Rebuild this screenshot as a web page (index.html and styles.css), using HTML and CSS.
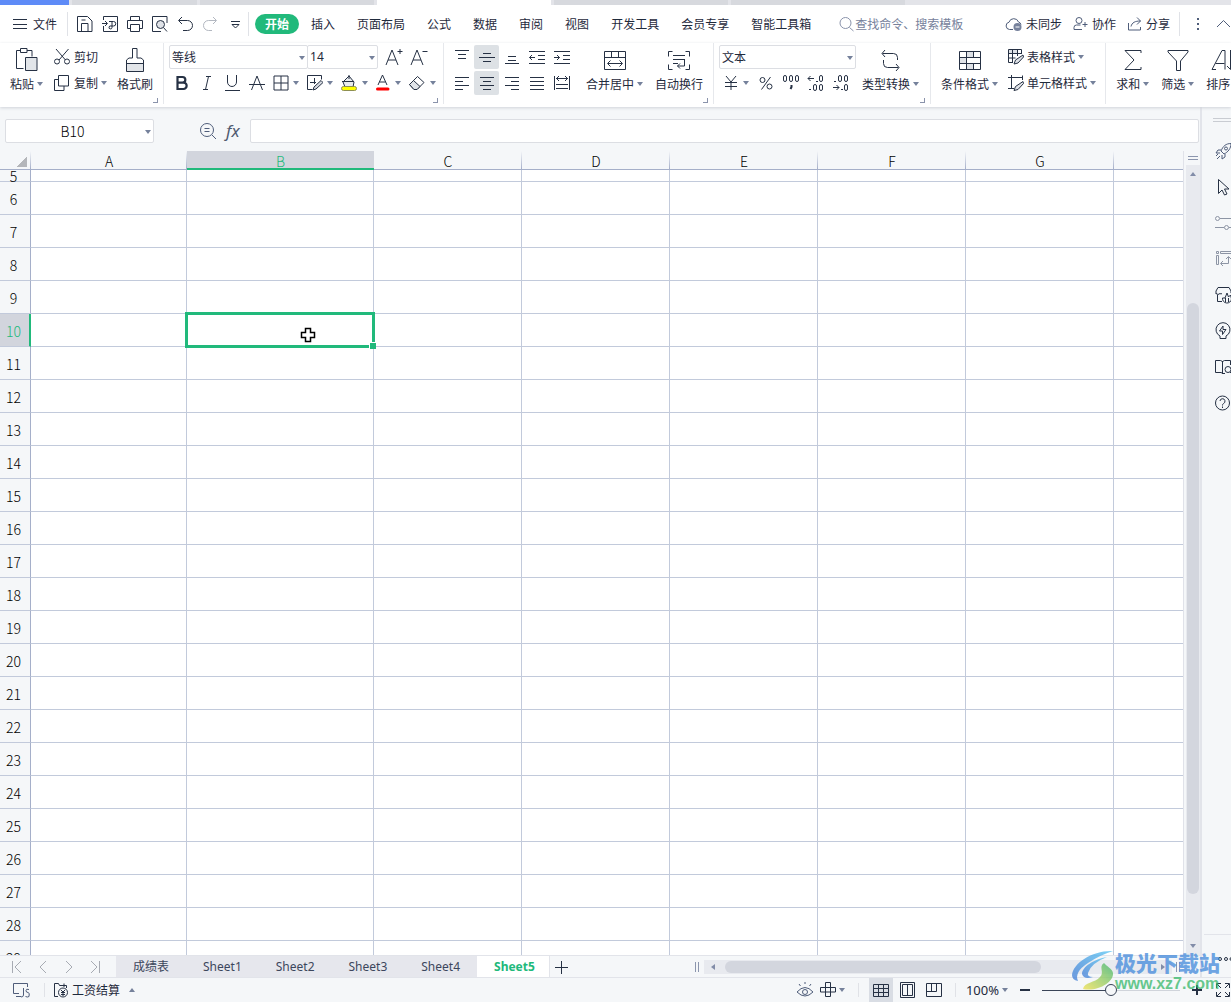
FILE: index.html
```html
<!DOCTYPE html>
<html lang="zh-CN">
<head>
<meta charset="utf-8">
<title>工资结算</title>
<link rel="stylesheet" href="styles.css">
</head>
<body>
<div class="doc-tabs"><span class="doc home"></span><span class="doc narrow"></span><span class="doc"></span><span class="doc current"></span><span class="doc"></span><span class="doc"></span></div>

<header class="menu">
  <button class="file"><svg width="15" height="16"><path d="M0 3.500h14M0 8.500h14M0 12.500h14"/></svg>文件</button>
  <span class="rule"></span>
  <div class="quick">
    <button aria-label="保存"><svg width="16" height="16"><path d="M.5 15.500V.5h10l4.500 4.500v10.500zM4.500 15V7.500h6.500V15M4.500 4h4"/></svg></button>
    <button aria-label="输出"><svg width="16" height="16"><path d="M1.500 4V.5h14v15h-14V10M0 7.500h5M3 5l2.500 2.500L3 10M7 5.500h4.500a1.500 1.500 0 0 1 0 4.500H9a1.500 1.500 0 1 0 1 1.500V5.500"/></svg></button>
    <button aria-label="打印"><svg width="16" height="16"><path d="M3.500 4.500V.5h9v4M3.500 12.500h-3v-8h15v8h-3M3.500 8.500h9v7h-9z"/></svg></button>
    <button aria-label="打印预览"><svg width="16" height="16"><path d="M15 7V.5H.5v15H9M11.500 11.500l3.500 4"/><circle cx="8.500" cy="8.500" r="4" fill="#dfe2e7"/></svg></button>
    <button aria-label="撤销"><svg width="16" height="16"><path d="M5 1L1.500 4.500 5 8M2 4.500h8.500a5 5 0 0 1 0 10H6"/></svg></button>
    <button aria-label="恢复" class="off"><svg width="16" height="16"><path d="M11 1l3.500 3.500L11 8M14 4.500H6.500a5 5 0 0 0 0 10H10"/></svg></button>
    <button aria-label="更多"><svg width="16" height="16"><path d="M4 5.500h9M5 8.500l3.500 3.500L12 8.500z"/></svg></button>
  </div>
  <span class="rule"></span>
  <nav class="tabs">
    <a href="#" class="on">开始</a><a href="#">插入</a><a href="#">页面布局</a><a href="#">公式</a><a href="#">数据</a><a href="#">审阅</a><a href="#">视图</a><a href="#">开发工具</a><a href="#">会员专享</a><a href="#">智能工具箱</a>
  </nav>
  <label class="search"><svg width="16" height="16"><circle cx="6.500" cy="7" r="5.500"/><path d="M10.500 11.500L14.500 15"/></svg><input type="text" placeholder="查找命令、搜索模板" aria-label="查找命令"></label>
  <div class="account">
    <button><svg width="18" height="16" class="mute"><path d="M8 13.500H4.500a3.700 3.700 0 0 1-.500-7.300A5 5 0 0 1 13.500 6M13.500 6a3.500 3.500 0 0 1 2.500 2.500"/><circle cx="12.500" cy="11" r="4" fill="#77829c" stroke="none"/><path d="M10.500 11h4" stroke="#fff"/></svg>未同步</button>
    <button><svg width="16" height="16" class="mute"><circle cx="6" cy="4.500" r="3"/><path d="M1 13.500v-2a2.500 2.500 0 0 1 2.500-2.500h4M1 13.500h8M9.500 8.500h5M12 6v5"/></svg>协作</button>
    <button><svg width="16" height="16" class="mute"><path d="M1.500 7v7h12v-3M4 10.500c1-4 4-5.500 9.500-5.500M10 1.500L13.500 5 10 8.500"/></svg>分享</button>
  </div>
  <span class="rule"></span>
  <button class="dots" aria-label="菜单"><svg width="4" height="16" class="mute"><path d="M1 3h2M1 8h2M1 13h2" stroke-width="2"/></svg></button>
  <button class="fold" aria-label="折叠"><svg width="15" height="16" class="mute"><path d="M1 11l6.500-6.500L14 11"/></svg></button>
</header>

<section class="ribbon">
  <div class="group clip">
    <button class="big"><svg width="24" height="24"><path d="M8.500 20.500h-7v-18h4M12 2.500h5v6M5.500.5h6.500v4h-6.500z"/><path d="M10.500 9.500h11.500v13h-11.500z" fill="#e2e5e9"/></svg><span class="drop">粘贴</span></button>
    <div class="stack">
      <button class="line"><svg width="17" height="16"><path d="M2 0l9.500 11M14.500 0L5 11"/><circle cx="3" cy="12.500" r="2.500"/><circle cx="13" cy="12.500" r="2.500"/></svg>剪切</button>
      <button class="line"><svg width="17" height="16"><path d="M4.500.5h10v10.500h-10zM4.500 4.500h-4v11h9.500V11"/></svg><span class="drop">复制</span></button>
    </div>
    <button class="big brush"><svg width="24" height="24"><path d="M3 15h17v8H3z" fill="#e2e5e9" stroke="none"/><path d="M9.500.5h4.500v9.500h4l2.500 2v11.500h-17V12l2.500-2h3.500zM3.500 15.500h17"/></svg><span>格式刷</span></button>
    <button class="more" aria-label="剪贴板设置"></button>
  </div>

  <div class="group font">
    <div class="stack">
      <div class="row">
        <label class="pick face"><select aria-label="字体"><option>等线</option></select></label><label class="pick size"><select aria-label="字号"><option>14</option></select></label>
        <button class="ib first" aria-label="增大字号"><svg width="18" height="18"><path d="M1 17L7 2l6 15M3 12h8M12.500 3.500h5M15 1v5"/></svg></button>
        <button class="ib" aria-label="减小字号"><svg width="18" height="18"><path d="M1 17L7 2l6 15M3 12h8M12.500 3.500h5"/></svg></button>
      </div>
      <div class="row">
        <button class="ib" aria-label="加粗"><svg width="16" height="16"><path d="M3.500 2h5a2.800 2.800 0 0 1 0 5.700h-5zM3.500 7.700h6a3.100 3.100 0 0 1 0 6.300h-6z" stroke-width="2.200"/></svg></button>
        <button class="ib" aria-label="倾斜"><svg width="16" height="16"><path d="M7 1.500h5M9.500 1.500l-3 13M4 14.500h5"/></svg></button>
        <button class="ib" aria-label="下划线"><svg width="16" height="16"><path d="M3.500 0v7a4.500 4.500 0 0 0 9 0V0M1 15.500h15"/></svg></button>
        <button class="ib" aria-label="删除线"><svg width="16" height="16"><path d="M2.500 15L8 1l5.500 14M0 9.500h16"/></svg></button>
        <button class="ib wide" aria-label="边框"><svg width="16" height="16"><path d="M1 1h14v14H1zM8 1v14M1 8h14"/></svg></button>
        <button class="ib wide" aria-label="绘图边框"><svg width="16" height="16"><path d="M5.500 14.500h-5V.5h14v4M3 7.500h6M7.500 3v6"/><path d="M6 15l1-3 7-6.500 2 2L9 14z" fill="#d5d9e0"/></svg></button>
        <button class="ib wide" aria-label="填充颜色"><svg width="18" height="18"><path d="M3 8l6-6 5 6-1 5H5z" fill="#e8ebef"/><path d="M2 7.500h12M9 1v4"/><rect x="1.500" y="12.500" width="15" height="4" rx="2" fill="#ff0" stroke="#8e8f52"/></svg></button>
        <button class="ib wide" aria-label="字体颜色"><svg width="16" height="18"><path d="M3 11L7.500 1 12 11M4.500 8h6"/><path d="M2.500 15h10.500" stroke="#f00" stroke-width="3" stroke-linecap="round"/></svg></button>
        <button class="ib wide" aria-label="清除"><svg width="18" height="18"><path d="M1.500 10.500l8-8 6.500 6-7 7H6z"/><path d="M1.500 10.500l4-4 6.500 6-3 3H6z" fill="#dfe3e8"/></svg></button>
      </div>
    </div>
    <button class="more" aria-label="字体设置"></button>
  </div>

  <div class="group align">
    <div class="stack">
      <div class="row">
        <button class="ib" aria-label="顶端对齐"><svg width="16" height="16"><path d="M1 1.500h14M4 5.500h8M4 9.500h8"/></svg></button>
        <button class="ib on" aria-label="垂直居中"><svg width="16" height="16"><path d="M4 4.500h8M0 8.500h16M4 12.500h8"/></svg></button>
        <button class="ib" aria-label="底端对齐"><svg width="16" height="16"><path d="M4 7.500h8M4 11.500h8M1 14.500h14"/></svg></button>
        <button class="ib" aria-label="减少缩进"><svg width="18" height="16"><path d="M1 2.500h16M10 6.500h7M10 10.500h7M1 14.500h16M1.500 8.500H7M4 6L1.500 8.500 4 11"/></svg></button>
        <button class="ib" aria-label="增加缩进"><svg width="18" height="16"><path d="M1 2.500h16M10 6.500h7M10 10.500h7M1 14.500h16M1 8.500h5.500M4 6l2.500 2.500L4 11"/></svg></button>
      </div>
      <div class="row">
        <button class="ib" aria-label="左对齐"><svg width="16" height="16"><path d="M1 2.500h14M1 6.500h8M1 10.500h14M1 14.500h8"/></svg></button>
        <button class="ib on" aria-label="水平居中"><svg width="16" height="16"><path d="M1 2.500h14M4 6.500h8M1 10.500h14M4 14.500h8"/></svg></button>
        <button class="ib" aria-label="右对齐"><svg width="16" height="16"><path d="M1 2.500h14M7 6.500h8M1 10.500h14M7 14.500h8"/></svg></button>
        <button class="ib" aria-label="两端对齐"><svg width="16" height="16"><path d="M1 2.500h14M1 6.500h14M1 10.500h14M1 14.500h14"/></svg></button>
        <button class="ib" aria-label="分散对齐"><svg width="18" height="16"><path d="M1.500 1v14M16.500 1v14M3 3.500h12M6 1L3.500 3.500 6 6M12 1l2.500 2.500L12 6M3 9.500h12M3 13.500h12"/></svg></button>
      </div>
    </div>
    <button class="big"><svg width="24" height="24"><path d="M1.500 3.500h21v18h-21zM1.500 9.500h21M8.500 3.500v6M15.500 3.500v6M5 15.500h14M7.500 12.500l-3 3 3 3M16.500 12.500l3 3-3 3"/></svg><span class="drop">合并居中</span></button>
    <button class="big"><svg width="24" height="24"><path d="M5.500 3.500h-4v5M18.500 3.500h4v5M5.500 21.500h-4v-5M18.500 21.500h4v-5M6 7.500h12M6 11.500h12M6 15.500h5M17.500 11.500v6.500h-7M13 15.500L10.500 18l2.500 2.500"/></svg><span>自动换行</span></button>
    <button class="more" aria-label="对齐设置"></button>
  </div>

  <div class="group num">
    <div class="stack">
      <div class="row"><label class="pick kind"><select aria-label="数字格式"><option>文本</option></select></label></div>
      <div class="row">
        <button class="ib wide" aria-label="货币"><svg width="16" height="16"><path d="M3 1l5 6 5-6M8 7v8M2 7.500h12M2 11.500h12"/></svg></button>
        <button class="ib" aria-label="百分比"><svg width="16" height="16"><circle cx="4.500" cy="5" r="2.500"/><circle cx="11.500" cy="11.500" r="2.500"/><path d="M12.500 2l-9 12.500"/></svg></button>
        <button class="ib" aria-label="千位分隔"><svg width="18" height="18"><rect x="1.500" y="1.500" width="3" height="6" rx="1.500"/><rect x="7.500" y="1.500" width="3" height="6" rx="1.500"/><rect x="13.500" y="1.500" width="3" height="6" rx="1.500"/><path d="M9.500 11v2l-1 2" stroke-width="2"/></svg></button>
        <button class="ib" aria-label="增加小数位"><svg width="18" height="18"><path d="M1 4.500h6M3.500 2L1 4.500 3.500 7M9 7.500h2M2 15.500h2"/><rect x="12.500" y="1.500" width="3" height="6" rx="1.500"/><rect x="6.500" y="10.500" width="3" height="6" rx="1.500"/><rect x="12.500" y="10.500" width="3" height="6" rx="1.500"/></svg></button>
        <button class="ib" aria-label="减少小数位"><svg width="18" height="18"><path d="M1 13.500h6M4.500 11L7 13.500 4.500 16M2 7.500h2M9 15.500h2"/><rect x="6.500" y="1.500" width="3" height="6" rx="1.500"/><rect x="12.500" y="1.500" width="3" height="6" rx="1.500"/><rect x="12.500" y="10.500" width="3" height="6" rx="1.500"/></svg></button>
      </div>
    </div>
    <button class="big"><svg width="24" height="24"><path d="M6 2L3 5.500 6 9M3.500 5.500h11a4 4 0 0 1 4 4V12M17 23l3-3.500-3-3.500M19.500 19.500H8.500a4 4 0 0 1-4-4V12"/></svg><span class="drop">类型转换</span></button>
    <button class="more" aria-label="数字设置"></button>
  </div>

  <div class="group style">
    <button class="big"><svg width="24" height="24"><path d="M8 4h7v5H8zM1 10h7v6H1zM8 16h7v5H8z" fill="#dfe2e7" stroke="none"/><path d="M1.500 3.500h21v18h-21zM1.500 9.500h21M1.500 15.500h21M8.500 3.500v18M15.500 3.500v6M15.500 15.500v6"/></svg><span class="drop">条件格式</span></button>
    <div class="stack">
      <button class="line"><svg width="16" height="16"><path d="M1 1h8v4H1z" fill="#dfe2e7" stroke="none"/><path d="M5 13.500H.5V.5h13V5M.5 4.500h13M.5 9h7M4.500.5v13M9.500.5V7"/><path d="M6 15l1.500-4 7.500-5 .5 2-5.500 6z" fill="#dfe2e7"/></svg><span class="drop">表格样式</span></button>
      <button class="line"><svg width="16" height="16"><path d="M6 13.500H3.500V0M0 2.500h15M14.500.5V5M0 13.500h6"/><path d="M6 15.500l1.500-4 7.500-5 .5 2-5.500 6z" fill="#dfe2e7"/></svg><span class="drop">单元格样式</span></button>
    </div>
  </div>

  <div class="group last">
    <button class="big"><svg width="24" height="24"><path d="M20 5V2.500H4l9 9.500-9 9.500h16V19"/></svg><span class="drop">求和</span></button>
    <button class="big"><svg width="24" height="24"><path d="M2 2.500h20v1.500l-7.500 9v9.500h-4V13L2 4z"/></svg><span class="drop">筛选</span></button>
    <button class="big"><svg width="24" height="24"><path d="M1 21.500L11 2.500h3v19M4.500 15.500h9M1 21.500h4M19.500 2v19M16 18l3.500 3.500L23 18"/></svg><span class="drop">排序</span></button>
  </div>
</section>

<main class="work">
  <div class="book">
    <div class="formula">
      <label class="pick name"><input type="text" value="B10" aria-label="名称框"></label>
      <div class="fx">
        <button aria-label="浏览公式"><svg width="18" height="18" class="mute"><circle cx="8" cy="8" r="6.500"/><path d="M13 13l4 4M5.500 6.500h5M5.500 9.500h5"/></svg></button>
        <button class="fn" aria-label="插入函数">fx</button>
      </div>
      <input class="bar" type="text" aria-label="编辑栏">
    </div>
    <div class="sheet">
      <div class="view">
        <table>
          <colgroup><col class="c-head"><col class="c-a"><col class="c-b"><col class="c"><col class="c"><col class="c"><col class="c"><col class="c"><col></colgroup>
          <thead><tr><th class="corner"></th><th>A</th><th class="sel">B</th><th>C</th><th>D</th><th>E</th><th>F</th><th>G</th><th></th></tr></thead>
          <tbody id="rows"></tbody>
        </table>
      </div>
      <div class="vscroll">
        <span class="split"></span>
        <div class="track"><span class="arrow up"></span><span class="thumb"></span><span class="arrow down"></span></div>
      </div>
    </div>
    <div class="sheetbar">
      <div class="step">
        <button aria-label="第一张"><svg width="12" height="14"><path d="M1.500 1v12M10 1L4 7l6 6"/></svg></button>
        <button aria-label="上一张"><svg width="12" height="14"><path d="M9 1L3 7l6 6"/></svg></button>
        <button aria-label="下一张"><svg width="12" height="14"><path d="M3 1l6 6-6 6"/></svg></button>
        <button aria-label="最后一张"><svg width="12" height="14"><path d="M10.500 1v12M2 1l6 6-6 6"/></svg></button>
      </div>
      <nav class="sheets"><a href="#">成绩表</a><a href="#">Sheet1</a><a href="#">Sheet2</a><a href="#">Sheet3</a><a href="#">Sheet4</a><a href="#" class="on">Sheet5</a></nav>
      <button class="add" aria-label="新建工作表"><svg width="14" height="14"><path d="M0 7.500h13M6.500 1v13"/></svg></button>
      <span class="grip"></span>
      <div class="hscroll"><span class="arrow left"></span><span class="thumb"></span><span class="arrow right"></span></div>
      <span class="grip end"></span>
    </div>
  </div>
  <aside class="side">
    <span class="handle"></span>
    <button aria-label="推荐"><svg width="18" height="18" class="mute"><path d="M6 9c2-5 5-7.500 10-7.500C16 6.500 13 10 9 12zM6 8H3l-2 3h4M10 12v3l-3 2v-4M1 14l2-2M2 17l3-3"/><circle cx="11" cy="6.500" r="1.500"/></svg></button>
    <button aria-label="选择"><svg width="18" height="18"><path d="M3.500 1.500v14l3.500-3.500 2.500 5 2.500-1-2.500-5h4.500z"/></svg></button>
    <button aria-label="属性"><svg width="18" height="18" class="pale"><circle cx="2.500" cy="4.500" r="2"/><circle cx="11.500" cy="13.500" r="2"/><path d="M5 4.500h13M0 13.500h9M14 13.500h4"/></svg></button>
    <button aria-label="分析"><svg width="18" height="18" class="pale"><path d="M1.500 1.500h2v2h-2zM5.500 1.500h12v2h-12zM1.500 5.500h2v9h-2zM13.500 7v6.500H6M11 9l2.500-2.500L16 9M8 11l-2.500 2.500L8 16"/></svg></button>
    <button aria-label="备份"><svg width="18" height="18"><path d="M7 15.500H2.500V9M1 8V5l2-3.500h11L16 5v2M1 7.500q2 2 4 0 1 1 2 0"/><path d="M7.500 12a4.500 4.500 0 0 0 9 1l-1-4-2 2-1.500-4-2 5zM10.500 12v4M13.500 12v4"/></svg></button>
    <button aria-label="灵感"><svg width="18" height="18"><path d="M5 14A7 7 0 1 1 11 14v2.500H5zM8 4L4.500 9h3v3.500L11 7.500H8z"/></svg></button>
    <button aria-label="手册"><svg width="18" height="18"><path d="M7.500 3v13M8 15.500L6 14.500H.5v-12h5l2 1 2-1h6V7M8 15.500h2"/><circle cx="13" cy="11.500" r="3"/><path d="M15 14l3 3"/></svg></button>
    <button aria-label="帮助"><svg width="18" height="18"><circle cx="7.500" cy="9" r="7"/><path d="M5 7a2.500 2.500 0 1 1 3.500 2.500Q7.500 10 7.500 11.500M7.500 12.500v1.500"/></svg></button>
    <button class="ooo" aria-label="更多工具"><svg width="18" height="10"><circle cx="5" cy="5" r="1.500"/><circle cx="11" cy="5" r="1.500"/><circle cx="16.500" cy="5" r="1.500"/></svg></button>
  </aside>
</main>

<footer class="status">
  <button aria-label="脚本"><svg width="18" height="16" class="mute"><path d="M6 11.500H.5v-10h14V5M3 14.500h5M10.500 6v7q0 2-2.500 2M16 7.500q-3-1-3 1t2 2 1 4q-1.500 1-3.500 0"/></svg></button>
  <span class="rule"></span>
  <button class="plan"><svg width="16" height="16"><path d="M5 14.500H1.500V1.500h4l1 2h3M11 1.500V5M8.500 3.500h5V6"/><circle cx="10" cy="10.500" r="4.500"/><path d="M8 8l2 2 2-2M8 10.500h4M8 12.500h4M10 10v4"/></svg>工资结算<i class="tri up"></i></button>
  <div class="tools">
    <button aria-label="护眼模式"><svg width="18" height="18" class="mute"><path d="M1 11q8-9 16 0-8 8-16 0zM9 1v2M3 3l1.500 2M15 3l-1.500 2"/><circle cx="9" cy="11" r="2.500"/></svg></button>
    <button aria-label="阅读模式"><svg width="16" height="16"><path d="M5.500.5h5v14h-5zM.5 5.500h15v4.500H.5z"/></svg><i class="tri"></i></button>
    <span class="rule"></span>
    <button class="on" aria-label="普通视图"><svg width="16" height="16"><path d="M.5 2.500h15v12H.5zM.5 6.500h15M.5 10.500h15M5.500 2.500v12M10.500 2.500v12"/></svg></button>
    <button class="page" aria-label="页面布局"><svg width="16" height="16"><path d="M.5.5h14v15H.5zM2.500 2.500h10v11h-10zM7.500 2.500v11"/></svg></button>
    <button class="page" aria-label="分页预览"><svg width="16" height="16"><path d="M.5 1.500h15v13H.5zM5.500 1.500v8M10.500 1.500v8M.5 9.500h10"/></svg></button>
    <span class="rule"></span>
    <button class="pct">100%<i class="tri"></i></button>
    <button class="minus" aria-label="缩小"><svg width="10" height="10"><path d="M0 5h10" stroke-width="2"/></svg></button>
    <input type="range" min="0" max="200" value="100" aria-label="缩放">
    <button class="plus" aria-label="放大"><svg width="10" height="10"><path d="M0 5h10M5 0v10" stroke-width="2"/></svg></button>
    <button class="full" aria-label="全屏"><svg width="16" height="16"><path d="M10 1.500h4.500V6M14 2l-4 4M6 1.500H1.500V6M2 2l4 4M1.500 10v4.500H6M2 14l4-4M14.500 10v4.500H10M14 14l-4-4"/></svg></button>
  </div>
</footer>

<div class="brand">
  <svg width="44" height="42" viewBox="0 0 44 42">
    <defs>
      <linearGradient id="blue" x1="0" y1="1" x2="1" y2="0"><stop offset="0" stop-color="#3f7ad6"/><stop offset="1" stop-color="#53c3f2"/></linearGradient>
      <linearGradient id="green" x1="0" y1="1" x2="1" y2="0"><stop offset="0" stop-color="#f0e04a"/><stop offset="1" stop-color="#38b56b"/></linearGradient>
    </defs>
    <g stroke="none">
      <path d="M42 1C22 0 2 13 1 25q0 5 6 6Q3 22 17 13 29 5 42 1z" fill="url(#blue)"/>
      <path d="M36 7C23 9 11 17 11 24q2 6 11 3-6 0-5-4Q20 13 36 7z" fill="url(#blue)"/>
      <path d="M33 13c-6 4 1 9-4 14-5 6-16 5-17 12 15 3 31-7 30-16-1-5-6-6-9-10z" fill="url(#green)"/>
    </g>
  </svg>
  <div><b class="cn">极光下载站</b><b class="url">www.xz7.com</b></div>
</div>
<script src="app.js"></script>
</body>
</html>
```
FILE: styles.css
```css
* { box-sizing: border-box; }
body {
  margin: 0; height: 100vh; display: flex; flex-direction: column; overflow: hidden;
  position: relative; background: #f5f7f9; color: #1f2a3c;
  font: 12px/16px "Noto Sans CJK SC", sans-serif;
}
button, input, select { font: inherit; color: inherit; border: 0; padding: 0; margin: 0; background: none; outline: 0; }
button { display: flex; align-items: center; white-space: nowrap; flex: none; }
a { color: inherit; text-decoration: none; white-space: nowrap; }
svg { flex: none; display: block; fill: none; stroke: #263144; }
svg.mute { stroke: #4f5d7a; }
svg.pale { stroke: #8d95a5; }
.rule { width: 1px; height: 24px; background: #e0e2e7; flex: none; }

.doc-tabs { display: flex; gap: 3px; height: 5px; background: #e3e4e9; flex: none; }
.doc { width: 174px; background: #d7d9de; }
.doc.home { width: 69px; background: #5e8bf7; }
.doc.narrow { width: 125px; }
.doc.current { background: #fff; }

.menu { display: flex; align-items: center; height: 38px; background: #fff; padding-left: 13px; flex: none; }
.file { gap: 5px; margin-right: 10px; }
.quick { display: flex; gap: 9px; margin: 0 5px 0 9px; }
.quick .off svg { stroke: #b3b8c1; }
.tabs { display: flex; gap: 22px; margin-left: 6px; align-items: center; }
.tabs .on { background: #21b97b; color: #fff; font-weight: bold; line-height: 20px; border-radius: 10px; padding: 0 10px; margin-right: -10px; }
.search { display: flex; align-items: center; margin-left: 28px; flex: 1; }
.search svg { stroke: #8a93ab; }
.search input { width: 120px; }
.search input::placeholder { color: #76819b; opacity: 1; }
.account { display: flex; gap: 11px; margin-right: 9px; }
.account button { gap: 3px; }
.dots { margin: 0 16px; }
.fold { margin-right: 0; }

.ribbon { display: flex; height: 64px; background: #fff; overflow: hidden; flex: none; box-shadow: 0 1px 3px #cfd2d8; z-index: 1; }
.group { display: flex; gap: 12px; height: 61px; padding: 0 10px; border-right: 1px solid #e6e8ec; position: relative; flex: none; }
.clip { gap: 11px; }
.last { border: 0; }
.font { padding: 0 4px 0 5px; }
.align { padding-left: 5px; }
.num { padding: 0 11px 0 5px; gap: 6px; }
.style { gap: 10px; padding-right: 9px; }
.brush { margin-left: -1px; }
.big { flex-direction: column; gap: 4px; padding-top: 5px; align-self: flex-start; }
.stack { display: flex; flex-direction: column; gap: 2px; padding-top: 2px; }
.row { display: flex; height: 24px; }
.line { height: 24px; gap: 3px; }
.drop { display: flex; align-items: center; gap: 3px; }
.drop::after, .wide::after, .pick::after, .tri { content: ""; border: 3px solid transparent; border-top: 4px solid #75819b; border-bottom: 0; flex: none; }
.tri.up { border-top: 0; border-bottom: 4px solid #75819b; }
.ib { width: 25px; height: 24px; justify-content: center; border-radius: 2px; }
.ib.wide { width: 34px; gap: 4px; }
.ib.on { background: #dde1e5; }
.ib.first { margin-left: 3px; }
.more { position: absolute; right: 5px; bottom: 1px; width: 5px; height: 5px; border: solid #8a93ab; border-width: 0 1px 1px 0; }
.pick { display: flex; position: relative; border: 1px solid #dcdee3; border-radius: 2px; background: #fff; height: 24px; }
.pick::after { position: absolute; right: 2px; top: 10px; }
.pick select { appearance: none; width: 100%; padding: 0 2px; }
.face { width: 139px; }
.size { width: 71px; margin-left: -1px; font-family: "Noto Sans", sans-serif; }
.kind { width: 137px; }

.work { display: flex; flex: 1; min-height: 0; }
.book { flex: 1; min-width: 0; display: flex; flex-direction: column; }
.formula { display: flex; align-items: center; padding: 4px 1px 0 5px; height: 44px; flex: none; }
.name { width: 149px; }
.name input { flex: 1; min-width: 0; text-align: center; padding-right: 14px; font-size: 14px; font-weight: 300; color: #000; }
.fx { display: flex; gap: 9px; margin: 0 9px 0 45px; }
.fn { width: 15px; font: italic 17px/20px "Noto Sans", sans-serif; color: #4f5a70; }
.bar { flex: 1; height: 24px; border: 1px solid #dcdee3; border-radius: 2px; background: #fff; padding: 0 4px; }

.sheet { display: flex; flex: 1; min-height: 0; }
.view { flex: 1; min-width: 0; overflow: hidden; border-right: 1px solid #e0e2e9; }
table { table-layout: fixed; width: 100%; border-collapse: separate; border-spacing: 0; font: 14px/16px "Noto Sans CJK SC", sans-serif; }
.c-head { width: 31px; } .c-a { width: 156px; } .c-b { width: 187px; } .c { width: 148px; }
th, td { padding: 0; border: solid #c2cadb; border-width: 0 1px 1px 0; }
th { font-weight: 300; background: #f5f7f9; color: #000; }
td { background: #fff; }
td:last-child { border-right: 0; }
thead th { height: 19px; padding-top: 2px; border-right: 0; border-bottom-color: #a5afc9; background: linear-gradient(#f5f7f9, #a5afc9) right / 1px 100% no-repeat #f5f7f9; }
thead th:last-child { background: #f5f7f9; }
thead .sel { background: #d2d5dd; color: #21b97b; border-bottom-color: #21b97b; box-shadow: inset 0 -1px #21b97b; }
tbody tr { height: 33px; }
tbody th { border-right-color: #a5afc9; padding: 2px 3px 0 0; }
tbody tr.cut { height: 12px; line-height: 9px; }
tbody .sel { background: #d2d5dd; color: #21b97b; border-right: 2px solid #21b97b; padding-right: 2px; }
.corner::after { content: ""; display: block; width: 10px; height: 10px; margin: 2px 4px 0 auto; background: linear-gradient(135deg, transparent 50%, #b4b6ba 50%); }
.active { position: relative; }
.frame { position: absolute; inset: -2px; border: 3px solid #21b97b; z-index: 1; }
.frame::after { content: ""; position: absolute; right: -4px; bottom: -4px; width: 6px; height: 6px; background: #21b97b; border: solid #fff; border-width: 1px 0 0 1px; }
.cross { position: absolute; left: 113px; top: 13px; }
.vscroll { width: 16px; padding-left: 2px; display: flex; flex-direction: column; flex: none; }
.split { height: 4px; margin: 5px 2px 5px; border: solid #8c96ae; border-width: 1px 0; }
.track { flex: 1; background: #e8eaef; display: flex; flex-direction: column; align-items: center; padding: 7px 0; }
.track .thumb { width: 12px; height: 591px; margin: 127px 0 auto; flex: 0 1 auto; border-radius: 6px; background: #d3d6de; }
.arrow { border: 3px solid transparent; flex: none; }
.arrow.up { border-top: 0; border-bottom: 4px solid #828ca8; }
.arrow.down { border-bottom: 0; border-top: 4px solid #828ca8; }
.arrow.left { border-left: 0; border-right: 4px solid #828ca8; }
.arrow.right { border-right: 0; border-left: 4px solid #828ca8; }

.sheetbar { display: flex; align-items: center; height: 23px; border: solid #e2e4ea; border-width: 1px 0; flex: none; color: #3c465c; }
.step { display: flex; gap: 14px; padding-left: 11px; width: 116px; flex: none; }
.step svg { stroke: #a7abb3; }
.sheets { display: flex; height: 21px; line-height: 21px; font-family: "Noto Sans", "Noto Sans CJK SC", sans-serif; }
.sheets a { padding: 0 17px; background: #e6e7ed; }
.sheets .on { background: #fff; color: #21b97b; font-weight: bold; border-right: 1px solid #e2e4ea; padding-right: 14px; }
.add { margin: 0 auto 0 5px; }
.grip { width: 4px; height: 10px; margin-right: 5px; border: solid #8c96ae; border-width: 0 1px; flex: none; }
.grip.end { margin: 0 20px 0 4px; }
.hscroll { flex: 0 0 39%; height: 14px; padding: 0 7px; background: #e8eaef; display: flex; align-items: center; }
.hscroll .thumb { width: 316px; height: 12px; margin: 0 auto 0 10px; border-radius: 6px; background: #d3d6de; }

.side { width: 31px; border-left: 2px solid #e2e4ea; display: flex; flex-direction: column; gap: 18px; padding: 11px 0 13px 13px; overflow: hidden; flex: none; border-bottom: 1px solid #e2e4ea; }
.handle { height: 4px; border: solid #c9ccd2; border-width: 1px 0; margin: 0 0 2px -2px; flex: none; }
.ooo { margin: auto 0 0 -11px; padding: 19px 0 0 11px; border-top: 1px solid #e2e4ea; }

.status { display: flex; align-items: center; height: 24px; padding-left: 13px; flex: none; }
.status .rule { height: 14px; margin: 0 10px 0 13px; }
.status > .rule { margin-right: 8px; }
.plan { gap: 3px; }
.tri.up { margin-left: 6px; }
.tools { display: flex; align-items: center; margin-left: auto; }
.tools .tri { margin-left: 3px; }
.tools > button:first-child { margin-right: 6px; }
.tools .on { width: 24px; height: 24px; justify-content: center; background: #d9dde4; }
.page { margin-left: 7px; }
.page + .page { margin-left: 10px; }
.minus { margin: 0 12px; }
.pct { font: 13px/16px "Noto Sans", sans-serif; }
input[type="range"] { appearance: none; width: 138px; height: 12px; background: linear-gradient(90deg, #3a4558 50%, #d0d4db 50%) center / 100% 1px no-repeat; }
input[type="range"]::-webkit-slider-thumb { appearance: none; width: 12px; height: 12px; border-radius: 6px; border: 1px solid #3a4558; background: #f5f7f9; }
.plus { margin: 0 13px 0 12px; }

.brand { position: absolute; right: 11px; bottom: 8px; display: flex; opacity: .75; pointer-events: none; z-index: 2; }
.brand div { display: flex; flex-direction: column; }
.cn { font: 900 21px/24px "Noto Sans CJK SC", sans-serif; color: #4289db; }
.url { font: bold 16px/20px "Liberation Sans", sans-serif; color: #37b86a; }
```
FILE: app.js
```js
// Builds the visible rows of the grid, from 5 to 29, with B10 active.
const body = document.getElementById("rows");
for (let n = 5; n <= 29; n++) {
  const tr = body.insertRow();
  if (n === 5) tr.className = "cut";
  const th = document.createElement("th");
  th.textContent = n;
  if (n === 10) th.className = "sel";
  tr.append(th);
  for (let c = 0; c < 8; c++) {
    const td = tr.insertCell();
    if (n === 10 && c === 1) {
      td.className = "active";
      td.innerHTML = '<span class="frame"></span><svg class="cross" width="16" height="16"><path d="M5.500 1.500h5v4h4v5h-4v4h-5v-4h-4v-5h4z" fill="#fff" stroke="#000" stroke-width="1.500"/></svg>';
    }
  }
}
```
